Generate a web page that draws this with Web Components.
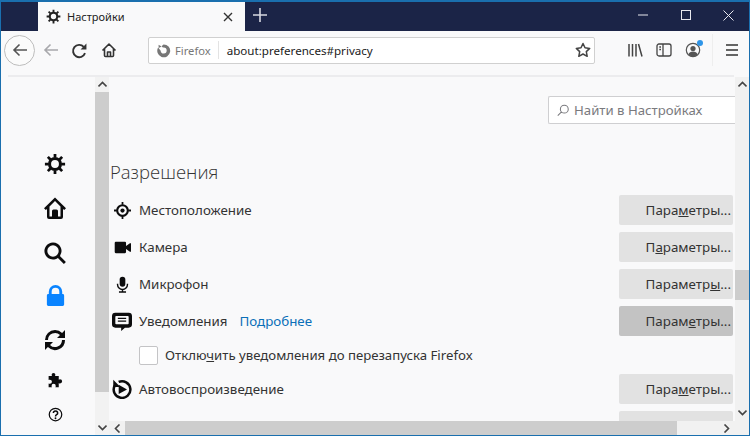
<!DOCTYPE html>
<html lang="ru">
<head>
<meta charset="utf-8">
<title>Настройки</title>
<style>
  html, body { margin: 0; height: 100%; overflow: hidden; }
  body { font-family: "Noto Sans", "Open Sans", sans-serif; }
</style>
</head>
<body>
<ff-window>
  <ff-titlebar slot="title"></ff-titlebar>
  <ff-navbar slot="nav"></ff-navbar>
  <ff-sidebar slot="side"></ff-sidebar>
  <ff-scrollbar slot="left"></ff-scrollbar>
  <ff-prefs slot="prefs"></ff-prefs>
</ff-window>
<script>
const ICONS = {
  gear: '<circle cx="12" cy="12" r="6" fill="none" stroke="currentColor" stroke-width="3.4"/><path fill="none" stroke="currentColor" stroke-width="3" d="M12 1v4M12 19v4M1 12h4M19 12h4M4.200 4.200 7 7M17 17l2.800 2.800M4.200 19.800 7 17M17 7l2.800-2.800"/>',
  home: '<path fill-rule="evenodd" d="M12 1.500 1 12.300l1.800 1.800 1.200-1.200V21a2 2 0 0 0 2 2h12a2 2 0 0 0 2-2v-8.100l1.200 1.200 1.800-1.800zM6.500 10.400 12 5l5.500 5.400V20.500H15V15a1.500 1.500 0 0 0-1.500-1.500h-3A1.500 1.500 0 0 0 9 15v5.500H6.500z"/>',
  search: '<path fill-rule="evenodd" d="M10 1.500a8.500 8.500 0 1 0 4.900 15.400l6 6 2-2-6-6A8.500 8.500 0 0 0 10 1.500zm0 2.800a5.700 5.700 0 1 1 0 11.400 5.700 5.700 0 0 1 0-11.400z"/>',
  lock: '<path fill-rule="evenodd" d="M12 1a7 7 0 0 0-7 7v2.500H4.500A1.500 1.500 0 0 0 3 12v9.500A1.500 1.500 0 0 0 4.500 23h15a1.500 1.500 0 0 0 1.500-1.500V12a1.500 1.500 0 0 0-1.500-1.500H19V8a7 7 0 0 0-7-7zm0 3a4 4 0 0 1 4 4v2.500H8V8a4 4 0 0 1 4-4z"/>',
  sync: '<path d="M12 2a10 10 0 0 0-10 10h3a7 7 0 0 1 12-4.900L14 10h8V2l-2.900 2.900A10 10 0 0 0 12 2zM2 14v8l2.900-2.900A10 10 0 0 0 22 12h-3a7 7 0 0 1-12 4.900L10 14z"/>',
  puzzle: '<path d="M10 2.500a2.500 2.500 0 0 1 2.500 2.500c0 .7-.3 1.200-.6 1.700h5.100v5c.5-.4 1-.7 1.700-.7a2.800 2.800 0 0 1 0 5.600c-.7 0-1.200-.3-1.700-.7V21.500h-4.600c.4-.5.600-1 .6-1.600a2.800 2.800 0 0 0-5.600 0c0 .6.200 1.100.6 1.600H3.500v-5c.5.400 1 .6 1.600.6a2.800 2.800 0 0 0 0-5.600c-.6 0-1.100.2-1.600.6V6.700h4.600c-.3-.5-.6-1-.6-1.700A2.500 2.500 0 0 1 10 2.500z"/>',
  help: '<circle cx="12" cy="12" r="10" fill="none" stroke="currentColor" stroke-width="2"/><path fill="none" stroke="currentColor" stroke-width="2.400" d="M8.500 9.500a3.500 3.200 0 1 1 5.300 2.800c-1.200.7-1.800 1.200-1.800 2.700"/><circle cx="12" cy="18" r="1.500"/>',
  location: '<circle cx="12" cy="12" r="7.500" fill="none" stroke="currentColor" stroke-width="3"/><circle cx="12" cy="12" r="3"/><path fill="none" stroke="currentColor" stroke-width="2.500" d="M12 0v4M12 20v4M0 12h4M20 12h4"/>',
  camera: '<path d="M2.500 4h13A1.500 1.500 0 0 1 17 5.500v4.300L22.500 6H24v12h-1.500L17 14.200v4.300a1.500 1.500 0 0 1-1.500 1.500h-13A1.500 1.500 0 0 1 1 18.500v-13A1.500 1.500 0 0 1 2.500 4z"/>',
  mic: '<rect x="8" y="1" width="8" height="14" rx="4"/><path fill="none" stroke="currentColor" stroke-width="2" d="M5 11v1a7 7 0 0 0 14 0v-1M12 19v3M7 22.500h10"/>',
  message: '<path fill-rule="evenodd" d="M4 2h16a4 4 0 0 1 4 4v10a4 4 0 0 1-4 4h-4.500L11 24v-4H4a4 4 0 0 1-4-4V6a4 4 0 0 1 4-4zm1 4a1 1 0 0 0-1 1v8a1 1 0 0 0 1 1h14a1 1 0 0 0 1-1V7a1 1 0 0 0-1-1zM7 8h10v1.500H7zm0 3.500h10V13H7z"/>',
  autoplay: '<path d="M8 7v11l10-5.500z"/><path fill="none" stroke="currentColor" stroke-width="3" d="M8 3.500A10 10 0 1 1 3.200 8"/><path d="M1.500 1v8.500H10z"/>',
  back: '<path fill="none" stroke="currentColor" stroke-width="1.600" d="M15 8H2M7.500 2.500 2 8l5.500 5.500"/>',
  reload: '<path fill="none" stroke="currentColor" stroke-width="1.800" d="M13.200 10.500A5.800 5.800 0 1 1 12 4.500"/><path d="M14.500 1.500v5.500H9z"/>',
  homeSmall: '<path fill="none" stroke="currentColor" stroke-width="1.600" stroke-linejoin="round" d="M1.500 8.500 8 2l6.500 6.500M3.500 7v6.500a1 1 0 0 0 1 1h7a1 1 0 0 0 1-1V7M6.500 14.500V10h3v4.500"/>',
  star: '<path fill="none" stroke="currentColor" stroke-width="1.500" stroke-linejoin="round" d="m8 1.500 2 4.300 4.700.6-3.400 3.200.9 4.700L8 12l-4.200 2.300.9-4.700L1.300 6.400 6 5.800z"/>',
  library: '<path fill="none" stroke="currentColor" stroke-width="1.500" d="M2 2v12.500M5.500 2v12.500M9 2v12.500M11.500 2l3.500 12.500"/>',
  panel: '<rect x="1" y="2" width="14" height="12" rx="2" fill="none" stroke="currentColor" stroke-width="1.300"/><path fill="none" stroke="currentColor" stroke-width="1.300" d="M7 2v12M3.300 5h1.700M3.300 7.500h1.700"/>',
  account: '<circle cx="8" cy="8" r="6.700" fill="none" stroke="currentColor" stroke-width="1.200"/><circle cx="8" cy="6.500" r="2.600"/><path d="M3.500 12.500c.6-2.200 2.400-3 4.500-3s3.900.8 4.500 3A6 6 0 0 1 8 14.500a6 6 0 0 1-4.500-2z"/>',
  menu: '<path fill="none" stroke="currentColor" stroke-width="1.500" d="M2 3h12M2 8h12M2 13h12"/>',
  firefox: '<path fill-rule="evenodd" d="M8 1.500 6 3.500c.4.900 1.300 1.300 2.200 1.300a3.200 3.200 0 1 1-3.200 3.400L2.300 4.900A6.900 6.900 0 1 0 8 1.500z"/><path d="M2.700 1.800l.2 3.500 3-1.700z"/>',
  loupe: '<path fill="none" stroke="currentColor" stroke-width="1.200" d="M9.500 2.500a4.500 4.500 0 1 1 0 9 4.500 4.500 0 0 1 0-9zM6.300 10.200 2 14.500"/>'
}

function icon(name, size, box = 24) {
  return `<svg width="${size}" height="${size}" viewBox="0 0 ${box} ${box}" fill="currentColor" aria-hidden="true">${ICONS[name]}</svg>`
}

const chevron = d => `<svg width="9" height="9" viewBox="0 0 9 9"><path fill="none" stroke="#444" stroke-width="1.600" d="${d}"/></svg>`
const UP = 'M.5 6.500l4-4 4 4'
const DOWN = 'M.5 2.500l4 4 4-4'
const LEFT = 'M6.500.5l-4 4 4 4'
const RIGHT = 'M2.500.5l4 4-4 4'

class FfWindow extends HTMLElement {
  constructor() {
    super()
    this.attachShadow({ mode: 'open' })
    this.shadowRoot.innerHTML = `
      <style>
        :host {
          display: flex; flex-direction: column;
          width: 750px; height: 436px; box-sizing: border-box;
          border: 1px solid #1a6fae; border-top-width: 2px;
          background: #f9f9fa; overflow: hidden;
        }
        .rule { height: 2px; background: #ececee; margin: 0 15px 0 7px; flex: none; }
        .page { flex: 1; display: flex; min-height: 0; }
      </style>
      <slot name="title"></slot>
      <slot name="nav"></slot>
      <div class="rule"></div>
      <div class="page">
        <slot name="side"></slot>
        <slot name="left"></slot>
        <slot name="prefs"></slot>
      </div>`
  }
}

class FfTitlebar extends HTMLElement {
  constructor() {
    super()
    this.attachShadow({ mode: 'open' })
    this.shadowRoot.innerHTML = `
      <style>
        :host { display: flex; height: 29px; background: #1b2447; color: #fff; flex: none; }
        .tab {
          margin-left: 37px; width: 207px; height: 31px; margin-top: -2px; box-sizing: border-box;
          background: #f9f9fa; border-top: 2px solid #0a84ff; color: #222;
          display: flex; align-items: center; padding: 0 12px 0 8px; gap: 6px; font-size: 11px;
        }
        .tab span { flex: 1; }
        .x { color: #333; }
        .new { width: 30px; display: flex; align-items: center; justify-content: center; color: #d6d8e0; padding-bottom: 3px; }
        .sp { flex: 1; }
        .ctl { width: 43px; display: flex; align-items: center; justify-content: center; color: #e8e8ee; padding-bottom: 3px; }
        .ctl:last-child { width: 42px; }
      </style>
      <div class="tab">${icon('gear', 15)}<span>Настройки</span>
        <svg class="x" width="10" height="10" viewBox="0 0 10 10"><path fill="none" stroke="currentColor" stroke-width="1.400" d="M1 1l8 8M9 1 1 9"/></svg>
      </div>
      <div class="new"><svg width="14" height="14" viewBox="0 0 14 14"><path fill="none" stroke="currentColor" stroke-width="1.600" d="M7 0v14M0 7h14"/></svg></div>
      <div class="sp"></div>
      <div class="ctl"><svg width="10" height="10" viewBox="0 0 10 10"><path stroke="currentColor" d="M0 5h10"/></svg></div>
      <div class="ctl"><svg width="10" height="10" viewBox="0 0 10 10"><rect x=".5" y=".5" width="9" height="9" fill="none" stroke="currentColor"/></svg></div>
      <div class="ctl"><svg width="11" height="11" viewBox="0 0 11 11"><path fill="none" stroke="currentColor" d="M.5.500l10 10M10.500.500l-10 10"/></svg></div>`
  }
}

class FfNavbar extends HTMLElement {
  constructor() {
    super()
    this.attachShadow({ mode: 'open' })
    this.shadowRoot.innerHTML = `
      <style>
        :host {
          display: flex; align-items: center; height: 44px; flex: none; box-sizing: border-box;
          background: #f9f9fa; color: #333; padding: 0 0 6px 3px;
        }
        .b { width: 30px; display: flex; justify-content: center; align-items: center; flex: none; }
        .back { width: 31px; height: 31px; border: 1px solid #bdbdbd; border-radius: 50%; box-sizing: border-box; background: #fbfbfb; margin-right: 3px; color: #555; }
        .fwd { color: #a8a8ac; width: 26px; }
        .url {
          margin-left: 24px; width: 447px; height: 27px; box-sizing: border-box;
          background: #fff; border: 1px solid #d0d0d0; border-radius: 2px;
          display: flex; align-items: center; font-size: 11.6px; color: #222; padding: 0 3px 0 7px;
        }
        .id { display: flex; align-items: center; gap: 4px; color: #777; padding-right: 7px; border-right: 1px solid #e3e3e3; height: 18px; margin-right: 8px; font-size: 11.2px; }
        .addr { flex: 1; }
        .star { display: flex; color: #444; }
        .tools { margin-left: 32px; display: flex; align-items: center; gap: 13px; color: #444; }
        .acct { position: relative; display: flex; color: #555; }
        .dot { position: absolute; right: -2px; top: -2px; width: 6px; height: 6px; border-radius: 50%; background: #2e95e8; }
        .sep { width: 1px; height: 32px; background: #eee; margin: 0 11px; }
        .menu { display: flex; }
      </style>
      <div class="b back">${icon('back', 16, 16)}</div>
      <div class="b fwd">${icon('back', 16, 16)}</div>
      <div class="b">${icon('reload', 17, 16)}</div>
      <div class="b">${icon('homeSmall', 16, 16)}</div>
      <div class="url">
        <div class="id">${icon('firefox', 15, 16)}<span>Firefox</span></div>
        <div class="addr">about:preferences#privacy</div>
        <div class="star">${icon('star', 16, 16)}</div>
      </div>
      <div class="tools">
        ${icon('library', 16, 16)}
        ${icon('panel', 16, 16)}
        <div class="acct">${icon('account', 16, 16)}<span class="dot"></span></div>
      </div>
      <div class="sep"></div>
      <div class="menu">${icon('menu', 16, 16)}</div>`
  }
}

class FfSidebar extends HTMLElement {
  constructor() {
    super()
    this.attachShadow({ mode: 'open' })
    const item = (name, size, h, color) =>
      `<div class="i" style="height:${h}px;color:${color || '#0c0c0d'}">${icon(name, size)}</div>`
    this.shadowRoot.innerHTML = `
      <style>
        :host { display: block; width: 94px; flex: none; background: #f9f9fa; padding-top: 64.5px; box-sizing: border-box; }
        .i { display: flex; justify-content: center; align-items: center; padding-left: 14px; }
      </style>
      ${item('gear', 22, 44)}
      ${item('home', 24, 45)}
      ${item('search', 24, 45)}
      ${item('lock', 23, 39, '#0a84ff')}
      ${item('sync', 24, 51)}
      ${item('puzzle', 18, 29)}
      ${item('help', 15, 39)}`
  }
}

class FfScrollbar extends HTMLElement {
  constructor() {
    super()
    this.attachShadow({ mode: 'open' })
    this.shadowRoot.innerHTML = `
      <style>
        :host { display: flex; flex-direction: column; width: 14px; flex: none; background: #f2f2f2; }
        .thumb { height: 300px; flex: none; background: #cdcdcd; }
        .rest { flex: 1; }
        .end { height: 15px; display: flex; align-items: center; justify-content: center; flex: none; }
      </style>
      <div class="end">${chevron(UP)}</div>
      <div class="thumb"></div>
      <div class="rest"></div>
      <div class="end">${chevron(DOWN)}</div>`
  }
}

class FfRow extends HTMLElement {
  constructor() {
    super()
    this.attachShadow({ mode: 'open' })
    const active = this.hasAttribute('active')
    const key = this.getAttribute('key') || 0
    const word = 'Параметры...'
    const text = word.slice(0, key) + '<u>' + word[key] + '</u>' + word.slice(+key + 1)
    this.shadowRoot.innerHTML = `
      <style>
        :host { display: flex; align-items: center; height: 30px; margin-bottom: 7px; padding-right: 2px; font-size: 13.35px; color: #333; flex: none; }
        .ic { width: 30px; height: 22px; display: flex; align-items: center; justify-content: center; padding-right: 4px; box-sizing: border-box; color: #0c0c0d; flex: none; }
        .label { flex: 1; white-space: nowrap; }
        .btn {
          width: 114px; height: 30px; flex: none; background: ${active ? '#c3c3c3' : '#e2e2e2'};
          display: flex; align-items: center; justify-content: flex-end; padding-right: 2px;
          box-sizing: border-box; border-radius: 2px; white-space: nowrap; overflow: hidden;
        }
      </style>
      <div class="ic">${icon(this.getAttribute('icon'), this.getAttribute('size') || 17)}</div>
      <div class="label"><slot></slot></div>
      <div class="btn"><span>${text}</span></div>`
  }
}

class FfPrefs extends HTMLElement {
  constructor() {
    super()
    this.attachShadow({ mode: 'open' })
    this.shadowRoot.innerHTML = `
      <style>
        :host { display: flex; flex: 1; min-width: 0; flex-direction: column; background: #f9f9fa; }
        .top { flex: 1; display: flex; min-height: 0; }
        .body { flex: 1; min-width: 0; overflow: hidden; padding-top: 19px; box-sizing: border-box; }
        .searchwrap { display: flex; justify-content: flex-end; height: 58px; }
        .search {
          width: 187px; height: 28px; box-sizing: border-box; background: #fff;
          border: 1px solid #cfcfd1; border-right: none; border-radius: 2px 0 0 2px;
          display: flex; align-items: center; gap: 4px; padding-left: 7px;
          font-size: 13.2px; color: #7a7a7e;
        }
        h2 { margin: 0 0 5px 1px; font-weight: 300; font-size: 18.5px; line-height: 36px; color: #333; font-family: "Open Sans", "Noto Sans", sans-serif; }
        a { color: #0a6fb8; text-decoration: none; margin-left: 12px; }
        .sub { display: flex; align-items: center; height: 28px; margin: -2px 0 5px 30px; font-size: 13.2px; color: #333; }
        .cb { width: 19px; height: 19px; box-sizing: border-box; background: #fff; border: 1px solid #c4c4c6; border-radius: 2px; margin-right: 7px; }
        .peek { height: 30px; margin: 0 2px 0 auto; width: 114px; background: #e2e2e2; border-radius: 2px; }
        .vbar { width: 14px; flex: none; background: #f1f1f1; display: flex; flex-direction: column; align-items: center; }
        .up { height: 15px; display: flex; align-items: center; flex: none; }
        .gap { height: 178px; flex: none; }
        .thumb { width: 100%; height: 30px; background: #cdcdcd; flex: none; }
        .rest { flex: 1; }
        .dn { height: 18px; display: flex; align-items: center; flex: none; }
        .hbar { height: 14px; display: flex; background: #f1f1f1; flex: none; align-items: center; }
        .l { width: 16px; display: flex; justify-content: center; }
        .t { width: 552px; height: 100%; background: #cdcdcd; }
        .sp { flex: 1; }
        .r { width: 24px; margin-right: 11px; display: flex; justify-content: center; }
      </style>
      <div class="top">
        <div class="body">
          <div class="searchwrap">
            <div class="search">${icon('loupe', 14, 16)}<span>Найти в Настройках</span></div>
          </div>
          <h2>Разрешения</h2>
          <ff-row icon="location" key="4">Местоположение</ff-row>
          <ff-row icon="camera" key="1">Камера</ff-row>
          <ff-row icon="mic" key="8">Микрофон</ff-row>
          <ff-row icon="message" size="20" key="5" active>Уведомления<a href="#">Подробнее</a></ff-row>
          <div class="sub"><div class="cb"></div><span>Отклю<u>ч</u>ить уведомления до перезапуска Firefox</span></div>
          <ff-row icon="autoplay" size="20" key="4">Автовоспроизведение</ff-row>
          <div class="peek"></div>
        </div>
        <div class="vbar">
          <div class="up">${chevron(UP)}</div>
          <div class="gap"></div>
          <div class="thumb"></div>
          <div class="rest"></div>
          <div class="dn">${chevron(DOWN)}</div>
        </div>
      </div>
      <div class="hbar">
        <div class="l">${chevron(LEFT)}</div>
        <div class="t"></div>
        <div class="sp"></div>
        <div class="r">${chevron(RIGHT)}</div>
      </div>`
  }
}

customElements.define('ff-window', FfWindow)
customElements.define('ff-titlebar', FfTitlebar)
customElements.define('ff-navbar', FfNavbar)
customElements.define('ff-sidebar', FfSidebar)
customElements.define('ff-scrollbar', FfScrollbar)
customElements.define('ff-row', FfRow)
customElements.define('ff-prefs', FfPrefs)
</script>
</body>
</html>
